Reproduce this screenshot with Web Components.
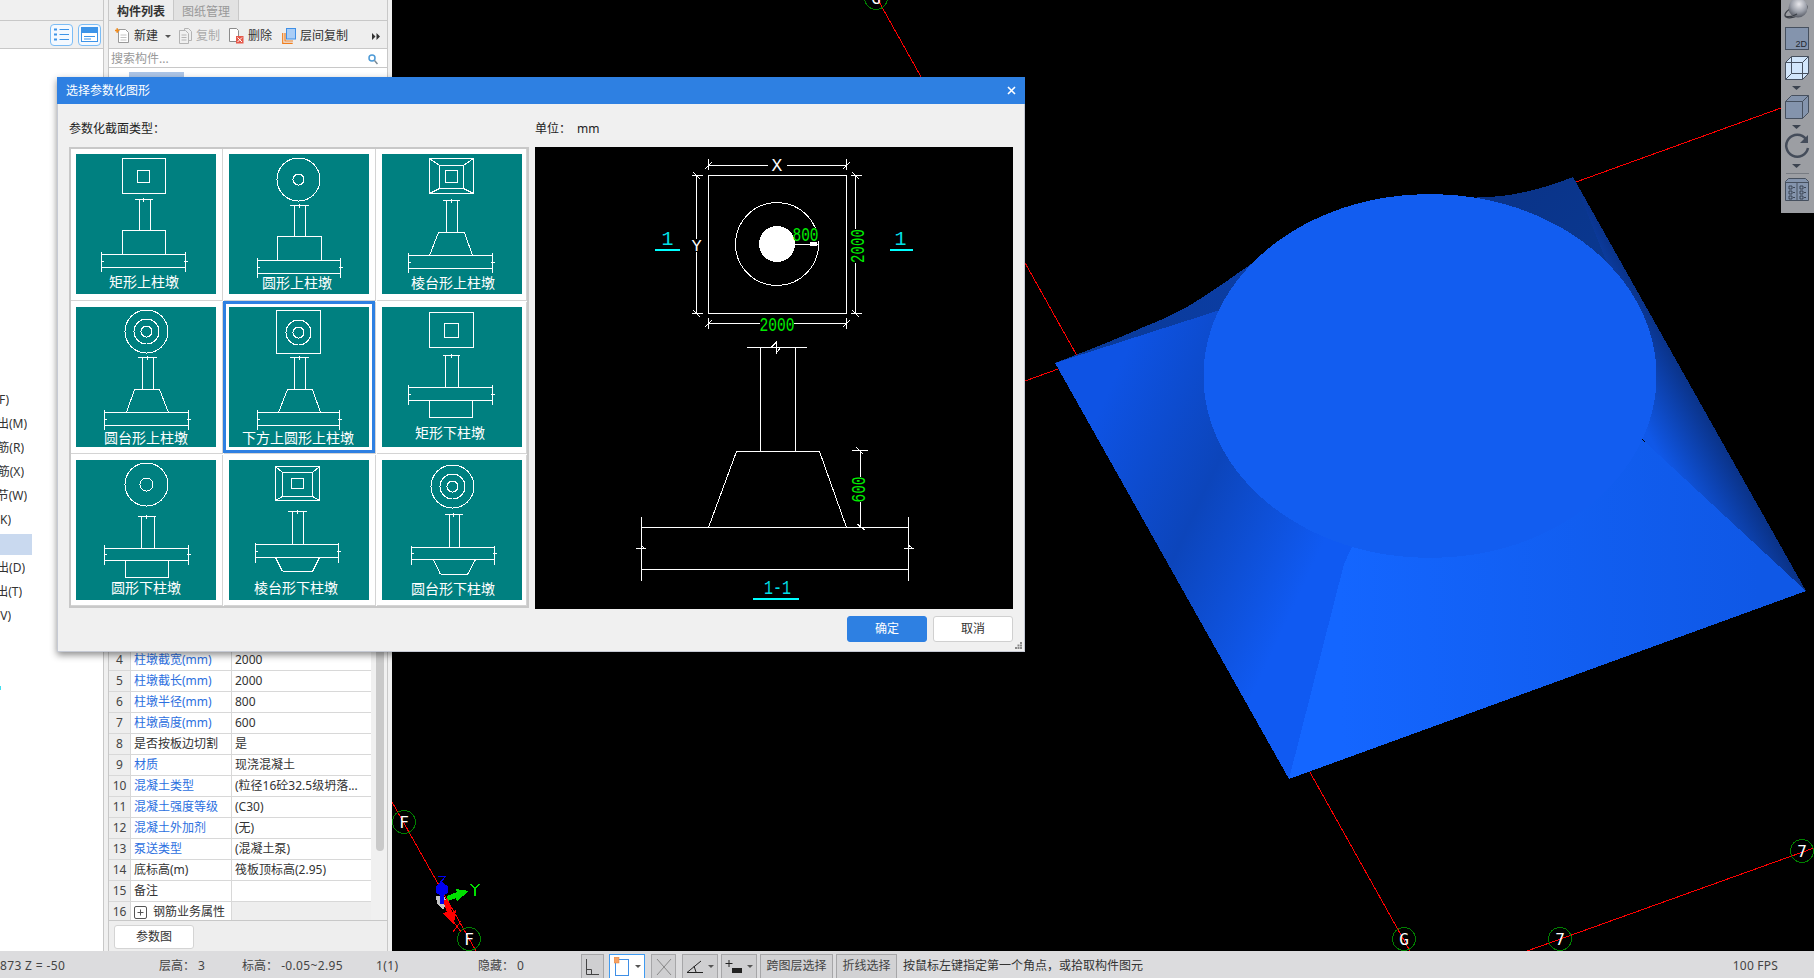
<!DOCTYPE html>
<html lang="zh">
<head>
<meta charset="utf-8">
<title>选择参数化图形</title>
<style>
  html, body { margin: 0; height: 100%; overflow: hidden; background: #000; }
</style>
</head>
<body>
<gl-app>
  <gl-side-nav slot="nav"></gl-side-nav>
  <gl-component-panel slot="panel">
    <gl-prop-row num="4" name="柱墩截宽(mm)" value="2000" link></gl-prop-row>
    <gl-prop-row num="5" name="柱墩截长(mm)" value="2000" link></gl-prop-row>
    <gl-prop-row num="6" name="柱墩半径(mm)" value="800" link></gl-prop-row>
    <gl-prop-row num="7" name="柱墩高度(mm)" value="600" link></gl-prop-row>
    <gl-prop-row num="8" name="是否按板边切割" value="是"></gl-prop-row>
    <gl-prop-row num="9" name="材质" value="现浇混凝土" link></gl-prop-row>
    <gl-prop-row num="10" name="混凝土类型" value="(粒径16砼32.5级坍落..." link></gl-prop-row>
    <gl-prop-row num="11" name="混凝土强度等级" value="(C30)" link></gl-prop-row>
    <gl-prop-row num="12" name="混凝土外加剂" value="(无)" link></gl-prop-row>
    <gl-prop-row num="13" name="泵送类型" value="(混凝土泵)" link></gl-prop-row>
    <gl-prop-row num="14" name="底标高(m)" value="筏板顶标高(2.95)"></gl-prop-row>
    <gl-prop-row num="15" name="备注" value=""></gl-prop-row>
    <gl-prop-row num="16" name="钢筋业务属性" value="" group></gl-prop-row>
  </gl-component-panel>
  <gl-cad-view slot="view"></gl-cad-view>
  <gl-status-bar slot="status"></gl-status-bar>
  <gl-section-dialog slot="dialog" heading="选择参数化图形">
    <gl-pier-thumb type="rectUp">矩形上柱墩</gl-pier-thumb>
    <gl-pier-thumb type="roundUp">圆形上柱墩</gl-pier-thumb>
    <gl-pier-thumb type="prismUp">棱台形上柱墩</gl-pier-thumb>
    <gl-pier-thumb type="coneUp">圆台形上柱墩</gl-pier-thumb>
    <gl-pier-thumb type="squareRoundUp" selected>下方上圆形上柱墩</gl-pier-thumb>
    <gl-pier-thumb type="rectDown">矩形下柱墩</gl-pier-thumb>
    <gl-pier-thumb type="roundDown">圆形下柱墩</gl-pier-thumb>
    <gl-pier-thumb type="prismDown">棱台形下柱墩</gl-pier-thumb>
    <gl-pier-thumb type="coneDown">圆台形下柱墩</gl-pier-thumb>
    <gl-section-preview slot="preview"></gl-section-preview>
  </gl-section-dialog>
</gl-app>

<script>
const UI_FONT = `"Noto Sans", "Noto Sans CJK SC", sans-serif`;
const BLUE = '#2e80e2';

// pixel values measured off the reference, all relative to the 140x140 teal tile
const PIER_SHAPES = {
  rectUp: {
    rects: [[46, 89, 4, 39], [61, 73, 16, 28]],
    top: [45, 58, 76], col: [63, 74, 76],
    block: [46, 89, 76, 100], slab: [25, 109, 100, 113, 97, 117],
    label: [68, 127]
  },
  roundUp: {
    circles: [[69, 25, 21.5], [69, 25, 5.5]],
    top: [51, 60, 79], col: [65, 76, 82],
    block: [48, 92, 82, 106], slab: [28, 111, 106, 119, 103, 123],
    label: [68, 128]
  },
  prismUp: {
    rects: [[47, 91, 4, 39], [57, 81, 11, 34], [63, 75, 16, 28]],
    diag: [47, 91, 4, 39, 57, 81, 11, 34],
    top: [46, 60, 77], col: [64, 75, 78],
    frustum: [56, 82, 78, 47, 90, 101], slab: [26, 110, 101, 114, 98, 118],
    label: [71, 128]
  },
  coneUp: {
    circles: [[70, 24, 21.5], [70, 24, 12.5], [70, 24, 5.5]],
    top: [50, 61, 80], col: [66, 77, 82],
    frustum: [58, 83, 82, 50, 92, 105], slab: [28, 112, 105, 118, 102, 122],
    label: [70, 130]
  },
  squareRoundUp: {
    rects: [[47, 91, 3, 46]],
    circles: [[69, 25, 12.5], [69, 25, 5.5]],
    top: [50, 60, 79], col: [65, 76, 82],
    frustum: [58, 83, 82, 49, 91, 105], slab: [28, 110, 105, 118, 102, 122],
    label: [69, 130]
  },
  rectDown: {
    rects: [[47, 91, 5, 40], [62, 76, 16, 30]],
    top: [48, 60, 77], col: [63, 76, 80],
    slab: [26, 110, 80, 93, 77, 97], block: [47, 90, 93, 110],
    label: [68, 125]
  },
  roundDown: {
    circles: [[70, 24, 21.5], [70, 24, 6.5]],
    top: [56, 61, 79], col: [65, 78, 88],
    slab: [28, 112, 88, 100, 84, 104], block: [49, 92, 100, 117],
    label: [70, 127]
  },
  prismDown: {
    rects: [[46, 90, 6, 40], [53, 83, 12, 36], [62, 74, 18, 28]],
    diag: [46, 90, 6, 40, 53, 83, 12, 36],
    top: [51, 58, 77], col: [63, 74, 84],
    slab: [26, 109, 84, 97, 82, 102], frustum: [46, 90, 97, 53, 83, 111],
    label: [67, 127]
  },
  coneDown: {
    circles: [[70, 26, 21.5], [70, 26, 12.5], [70, 26, 5.5]],
    top: [54, 62, 80], col: [67, 77, 87],
    slab: [29, 112, 87, 99, 85, 104], frustum: [51, 93, 99, 58, 85, 114],
    label: [71, 128]
  }
};

const rectPath = ([x1, x2, y1, y2]) => `M${x1} ${y1}H${x2}V${y2}H${x1}Z`;

class GlApp extends HTMLElement {
  constructor() {
    super();
    this.attachShadow({ mode: 'open' });
    this.shadowRoot.innerHTML = `<style>${this.styles}</style>
      <div class="main">
        <slot name="nav"></slot>
        <div class="gutter"></div>
        <slot name="panel"></slot>
        <div class="gutter"></div>
        <slot name="view"></slot>
      </div>
      <slot name="status"></slot>
      <slot name="dialog"></slot>`;
  }

  get styles() {
    return `
      :host {
        display: grid;
        grid-template-rows: 951px 27px;
        width: 1814px;
        height: 978px;
        position: relative;
        overflow: hidden;
        font: 12px/16px ${UI_FONT};
        color: #333;
      }
      .main { display: flex; min-height: 0; }
      .gutter { width: 4px; flex: none; background: #f0f0f0; }
    `;
  }
}

class GlSideNav extends HTMLElement {
  constructor() {
    super();
    this.attachShadow({ mode: 'open' });
    const items = [['F)', 9], ['出(M)', 27], ['筋(R)', 24], ['筋(X)', 24], ['节(W)', 27], ['K)', 11], ['', 32], ['出(D)', 25], ['出(T)', 22], ['V)', 11]];
    const rows = items.map(([text, end]) => text
      ? `<div class="row" style="width:${end}px"><span>${text}</span></div>`
      : `<div class="row"><div class="hl"></div></div>`).join('');
    this.shadowRoot.innerHTML = `<style>${this.styles}</style>
      <div class="strip"></div>
      <div class="bar">
        <button class="tool" aria-label="list">
          <svg width="17" height="15" viewBox="0 0 17 15" fill="none" stroke="#3d94e8"><path d="M1 2.5h3M1 7.5h3M1 12.5h3" stroke-width="2"/><path d="M6.5 2.5H16M6.5 7.5H16M6.5 12.5H16"/></svg>
        </button>
        <button class="tool" aria-label="form">
          <svg width="17" height="15" viewBox="0 0 17 15"><rect x=".5" y=".5" width="16" height="14" fill="#fff" stroke="#3d94e8"/><rect x="1" y="1" width="15" height="5" fill="#3d94e8"/><path d="M3 9.5h11M3 12h7" stroke="#3d94e8"/></svg>
        </button>
      </div>
      <div class="list">${rows}<div class="mark"></div></div>`;
  }

  get styles() {
    return `
      :host { display: flex; flex-direction: column; width: 103px; flex: none; background: #fff; border-right: 1px solid #c8c8c8; }
      .strip { height: 20px; background: #f0f0f0; border-bottom: 1px solid #c8c8c8; }
      .bar { height: 27px; background: #f0f0f0; border-bottom: 1px solid #c8c8c8; display: flex; gap: 5px; padding-left: 50px; align-items: center; }
      .tool { width: 23px; height: 22px; padding: 0; display: grid; place-items: center; background: #f4f9ff; border: 1px solid #7bbcf5; border-radius: 4px; }
      .list { flex: 1; padding-top: 339px; }
      .row { height: 24px; display: flex; justify-content: flex-end; align-items: center; overflow: hidden; white-space: nowrap; color: #333; }
      .row span { flex: none; }
      .hl { width: 32px; height: 21px; background: #c9d9ef; margin-right: auto; }
      .mark { width: 1px; height: 4px; background: #40e0f0; margin-top: 58px; }
    `;
  }
}

class GlComponentPanel extends HTMLElement {
  constructor() {
    super();
    this.attachShadow({ mode: 'open' });
    this.shadowRoot.innerHTML = `<style>${this.styles}</style>
      <div class="tabs"><div class="tab on">构件列表</div><div class="tab">图纸管理</div></div>
      <div class="tools">
        <span class="item first">
          <svg width="15" height="16" viewBox="0 0 15 16" fill="none"><path d="M3.5 1.5h7l3 3v10h-10z" fill="#fff" stroke="#9a9a9a"/><path d="M5.5 7h6M5.5 9.5h6M5.5 12h6" stroke="#c4c4c4"/><path d="M0 2.5h4.5M2.2 .3v4.5" stroke="#f08a1c" stroke-width="1.6"/></svg>
          新建<i class="caret"></i>
        </span>
        <span class="item off">
          <svg width="13" height="16" viewBox="0 0 13 16" fill="none" stroke="#b4b4b4"><path d="M.5 2.5h5v-2h4l3 3v9h-3"/><path d="M.5 2.5v13h9v-10l-3-3z" fill="#f0f0f0"/><path d="M2.5 7h5M2.5 9.500h5M2.500 12h5"/></svg>
          复制
        </span>
        <span class="item">
          <svg width="15" height="16" viewBox="0 0 15 16" fill="none"><path d="M.5 .5h7l2 2v11h-9z" fill="#fff" stroke="#8c8c8c"/><rect x="7" y="8" width="7.500" height="7.500" fill="#e6584a"/><path d="M8.500 9.500l4.500 4.500M13 9.500l-4.500 4.500" stroke="#fff"/></svg>
          删除
        </span>
        <span class="item wide">
          <svg width="14" height="16" viewBox="0 0 14 16" fill="none"><path d="M.7 5v10.300h10M3 5v8h8" stroke="#f07d1c" stroke-width="1.200"/><rect x="4.500" y=".5" width="9" height="10.500" fill="#a9cdf6" stroke="#3f8fe6"/></svg>
          层间复制
        </span>
        <svg class="more" width="8" height="7" viewBox="0 0 8 7" fill="#333"><path d="M0 0l3.500 3.500L0 7zM4.500 0L8 3.500 4.500 7z"/></svg>
      </div>
      <div class="search">
        <span>搜索构件...</span>
        <svg width="10" height="11" viewBox="0 0 10 11" fill="none"><circle cx="4" cy="4" r="3" stroke="#4d9ad6" stroke-width="1.500"/><path d="M6.500 6.500L9.500 10" stroke="#7a8a96" stroke-width="1.500"/></svg>
      </div>
      <div class="body"><div class="hl"></div></div>
      <div class="props">
        <div class="table"><slot></slot></div>
        <div class="track"><div class="thumb"></div></div>
      </div>
      <div class="foot"><button>参数图</button></div>`;
  }

  get styles() {
    return `
      :host { display: flex; flex-direction: column; width: 278px; flex: none; background: #eeeeee; border-left: 1px solid #c8c8c8; border-right: 1px solid #c8c8c8; height: 951px; box-sizing: content-box; }
      .tabs { height: 21px; display: flex; border-bottom: 1px solid #c8c8c8; box-sizing: border-box; }
      .tab { width: 64px; text-align: center; line-height: 23px; color: #999; background: #e2e2e2; border-right: 1px solid #c8c8c8; }
      .tab.on { color: #333; background: #eeeeee; font-weight: 600; }
      .tools { height: 28px; display: flex; align-items: center; box-sizing: border-box; border-bottom: 1px solid #c8c8c8; padding: 3px 4px 0 6px; }
      .item { display: inline-flex; align-items: center; gap: 4px; margin-right: 9px; }
      .item.off { color: #aaa; }
      .wide { margin-left: 1px; }
      .caret { width: 0; height: 0; border: 3px solid transparent; border-top: 3px solid #555; border-bottom: 0; margin-left: 3px; }
      .first { margin-right: 8px; }
      .more { margin-left: auto; margin-right: 3px; }
      .search { background: #fff; border-bottom: 1px solid #c8c8c8; display: flex; align-items: center; justify-content: space-between; padding: 2px 9px 0 2px; box-sizing: border-box; height: 19px; color: #999; }
      .body { flex: 1; background: #fff; }
      .hl { width: 55px; height: 6px; margin: 4px 0 0 20px; background: #adc6e8; }
      .props { height: 270px; display: flex; overflow: hidden; border-bottom: 1px solid #c8c8c8; }
      .table { width: 262px; flex: none; height: 273px; box-sizing: border-box; }
      .track { flex: 1; background: #f0f0f0; padding: 0 3px 0 5px; }
      .thumb { height: 201px; background: #c9c9c9; border-radius: 0 0 4px 4px; }
      .foot { height: 30px; display: flex; align-items: center; padding-left: 5px; box-sizing: border-box; }
      button { width: 80px; height: 24px; padding: 0; font: inherit; color: #333; background: #fff; border: 1px solid #d4d4d4; border-radius: 3px; margin-top: 1px; }
    `;
  }
}

class GlPropRow extends HTMLElement {
  constructor() {
    super();
    this.attachShadow({ mode: 'open' });
  }

  connectedCallback() {
    this.render();
  }

  render() {
    const plus = this.hasAttribute('group')
      ? `<svg width="13" height="13" viewBox="0 0 13 13" fill="none" stroke="#555"><rect x=".5" y=".5" width="12" height="12" rx="1.500"/><path d="M3.500 6.500h6M6.500 3.500v6"/></svg>`
      : '';
    this.shadowRoot.innerHTML = `<style>${this.styles}</style>
      <div class="num">${this.getAttribute('num')}</div>
      <div class="name ${this.hasAttribute('link') ? 'link' : ''}">${plus}<span>${this.getAttribute('name')}</span></div>
      <div class="value">${this.getAttribute('value')}</div>`;
  }

  get styles() {
    return `
      :host { display: grid; grid-template-columns: 22px 101px 1fr; height: 21px; box-sizing: border-box; border-bottom: 1px solid #d8d8d8; line-height: 20px; white-space: nowrap; background: #fff; }
      :host([group]) { background: #eeeeee; }
      .num { background: #eeeeee; border-right: 1px solid #d8d8d8; text-align: center; color: #444; }
      .name { padding-left: 3px; border-right: 1px solid #d8d8d8; display: flex; align-items: center; gap: 6px; background: #fff; }
      .link { color: #2c6fe0; }
      .value { padding-left: 3px; overflow: hidden; }
    `;
  }
}

class GlCadView extends HTMLElement {
  constructor() {
    super();
    this.attachShadow({ mode: 'open' });
    const marks = [[876, -2, 'G'], [404, 822, 'F'], [469, 939, 'F'], [1404, 939, 'G'], [1560, 939, '7'], [1802, 851, '7']]
      .map(([x, y, t]) => `<circle cx="${x}" cy="${y}" r="11.500" fill="none" stroke="#008000"/>
        <text x="${x}" y="${y + 6}" text-anchor="middle" class="axis">${t}</text>`).join('');
    this.shadowRoot.innerHTML = `<style>${this.styles}</style>
      <svg width="1422" height="951" viewBox="392 0 1422 951">
        <defs>
          <linearGradient id="faceLeft" gradientUnits="userSpaceOnUse" x1="1090" y1="430" x2="1325" y2="540">
            <stop offset="0" stop-color="#0e53e4"/><stop offset=".5" stop-color="#0c45bb"/><stop offset="1" stop-color="#105af2"/>
          </linearGradient>
          <linearGradient id="faceFront" gradientUnits="userSpaceOnUse" x1="1340" y1="650" x2="1760" y2="640">
            <stop offset="0" stop-color="#1466ff"/><stop offset="1" stop-color="#0f58e6"/>
          </linearGradient>
          <linearGradient id="faceRight" gradientUnits="userSpaceOnUse" x1="1640" y1="420" x2="1696" y2="389">
            <stop offset="0" stop-color="#1058e8"/><stop offset="1" stop-color="#0a3184"/>
          </linearGradient>
          <linearGradient id="faceBack" gradientUnits="userSpaceOnUse" x1="1060" y1="360" x2="1250" y2="270">
            <stop offset="0" stop-color="#0a3a96"/><stop offset="1" stop-color="#0b3da4"/>
          </linearGradient>
          <linearGradient id="faceTop" gradientUnits="userSpaceOnUse" x1="1480" y1="190" x2="1640" y2="330">
            <stop offset="0" stop-color="#0a3388"/><stop offset=".7" stop-color="#0a3890"/><stop offset="1" stop-color="#0c45b4"/>
          </linearGradient>
        </defs>
        <g class="cad" fill="none" stroke="#f00">
          <path d="M878 0L1410 951M392 802L476 951M1000 390L1781 108M1527 951L1814 848"/>
        </g>
        <g class="cad">
          <path fill="url(#faceBack)" d="M1055 363Q1120 338 1141 328Q1165 319 1187 307Q1215 290 1238 273L1263 256L1290 300L1217 312Z"/>
          <path fill="#0f58e6" d="M1430 376L1806 591L1289 779L1344 564Z"/>
          <path fill="url(#faceRight)" d="M1573 177L1806 591L1645 442L1520 250Z"/>
          <path fill="url(#faceTop)" d="M1573 177Q1520 198 1478 197L1460 210L1640 420L1655 385Z"/>
          <path fill="url(#faceLeft)" d="M1055 363L1289 779L1344 564L1430 376L1217 311Z"/>
          <path fill="url(#faceFront)" d="M1289 779L1806 591L1645 442L1600 400L1430 376L1344 564Z"/>
          <ellipse cx="1430" cy="376" rx="226.500" ry="182" fill="#125df0"/>
        </g>
        ${marks}
        <g class="cad">
          <path fill="#c4c4c4" d="M436 896l9 1 2 6-4 7-6-6z"/>
          <path fill="#f00" d="M443 901l5-2 4 13 4-2-2 14-12-11 5-1z"/>
          <path fill="#00e000" d="M447 896l10-4-1-3 13 2-12 10-1-3-8 3z"/>
          <path fill="#0000f0" d="M440 884l2-3 2 3 4 2 0 7-4 2v9h-4v-9l-4-2v-7z"/>
          <path d="M438 876h8l-8 9h8" fill="none" stroke="#0000f0"/>
          <path d="M471 884l4 5 4-5M475 889v7" fill="none" stroke="#00e000" stroke-width="1.500"/>
          <path d="M453 921l8 11M461 921l-8 11" fill="none" stroke="#f00"/>
        </g>
      </svg>
      <gl-view-tools></gl-view-tools>`;
  }

  get styles() {
    return `
      :host { display: block; flex: 1; position: relative; background: #000; overflow: hidden; }
      svg { display: block; }
      .cad { shape-rendering: crispEdges; }
      circle { shape-rendering: crispEdges; }
      .axis { font: 16px "DejaVu Sans Mono", monospace; fill: #fff; }
    `;
  }
}

class GlViewTools extends HTMLElement {
  constructor() {
    super();
    this.attachShadow({ mode: 'open' });
    const caret = y => `<path d="M11 ${y}h9l-4.500 4z" fill="#3c4450"/>`;
    this.shadowRoot.innerHTML = `<style>${this.styles}</style>
      <svg width="33" height="213" viewBox="0 0 33 213" fill="none">
        <defs><radialGradient id="ball" cx=".55" cy=".3" r=".75"><stop offset="0" stop-color="#e8e8ec"/><stop offset=".55" stop-color="#9a9ea8"/><stop offset="1" stop-color="#4a4e58"/></radialGradient></defs>
        <ellipse cx="15" cy="11" rx="12" ry="5" stroke="#3c4048" stroke-width="1.200" transform="rotate(-25 15 11)"/>
        <circle cx="17" cy="8" r="9.500" fill="url(#ball)"/>
        <path d="M4 16q5 2 12-2" stroke="#3c4048" stroke-width="1.200"/>
        <rect x="4.500" y="27.500" width="23" height="22" fill="#8494ad" stroke="#46505f"/>
        <text x="26" y="47" text-anchor="end" class="tag">2D</text>
        <path d="M4.500 62.500l6-6h17v17l-6 6h-17zM4.500 62.500h17v17M21.500 62.500l6-6" fill="#d2e6fb" stroke="#46505f"/>
        <path d="M10.500 56.500v17h17M10.500 73.500l-6 6" stroke="#46505f"/>
        ${caret(86)}
        <path d="M4.500 101.500l6-6h17v17l-6 6h-17zM4.500 101.500h17v17M21.500 101.500l6-6" fill="#8494ad" stroke="#46505f"/>
        ${caret(125)}
        <path d="M25 139a11 11 0 1 0 2 9" stroke="#444c5a" stroke-width="2.500"/>
        <path d="M27 135v8h-8z" fill="#444c5a"/>
        ${caret(164)}
        <path d="M5 173.500h23" stroke="#777b82"/>
        <path d="M4.500 181.500l3-3h17l3 3v19h-23z" fill="#8494ad" stroke="#46505f"/>
        <path d="M4.500 182.500h23M16 183v17" stroke="#46505f"/>
        <path d="M8 186h3v3H8zM8 191h3v3H8zM8 196h3v3H8zM19 186h3v3h-3zM19 191h3v3h-3zM19 196h3v3h-3zM12 187.500h2M12 192.500h2M12 197.500h2M23 187.500h2M23 192.500h2M23 197.500h2" stroke="#2c3440" stroke-width=".8"/>
      </svg>`;
  }

  get styles() {
    return `
      :host { position: absolute; top: 0; right: 0; width: 33px; height: 213px; background: #9c9ea3; }
      svg { display: block; }
      .tag { font: 9px "Liberation Sans", sans-serif; fill: #20262e; }
    `;
  }
}

class GlStatusBar extends HTMLElement {
  constructor() {
    super();
    this.attachShadow({ mode: 'open' });
    const caret = `<i class="caret"></i>`;
    this.shadowRoot.innerHTML = `<style>${this.styles}</style>
      <span class="cell" style="width:159px"><b>873 Z = -50</b></span>
      <span class="cell" style="width:83px">层高：&nbsp;3</span>
      <span class="cell" style="width:134px">标高：&nbsp;<b>-0.05~2.95</b></span>
      <span class="cell" style="width:102px"><b>1(1)</b></span>
      <span class="cell" style="width:103px">隐藏：&nbsp;0</span>
      <span class="btn" style="width:23px">
        <svg width="13" height="16" viewBox="0 0 13 16" fill="none" stroke="#444"><path d="M.5 0v15.500H13M.5 10.500h5v5"/></svg>
      </span>
      <span class="btn active" style="width:36px;margin-left:5px">
        <svg width="16" height="19" viewBox="0 0 16 19"><rect x="1.500" y="2.500" width="13" height="16" fill="#fff" stroke="#3f8fe6"/><rect x="0" y="0" width="5" height="6" fill="#f5a266" stroke="#e8823a" stroke-width=".5"/></svg>${caret}
      </span>
      <span class="btn" style="width:25px;margin-left:6px">
        <svg width="16" height="18" viewBox="0 0 16 18" fill="none" stroke="#888"><path d="M1 1l14 16M15 1L1 17"/></svg>
      </span>
      <span class="btn" style="width:36px;margin-left:6px">
        <svg width="17" height="13" viewBox="0 0 17 13" fill="none" stroke="#222"><path d="M15 1L1 12.500h16M8 6l2 6"/></svg>${caret}
      </span>
      <span class="btn" style="width:36px;margin-left:3px">
        <svg width="17" height="14" viewBox="0 0 17 14"><path d="M4 0v7M.5 3.500h7" stroke="#222" fill="none"/><rect x="7" y="8" width="10" height="5" fill="#222"/></svg>${caret}
      </span>
      <span class="btn text" style="width:73px;margin-left:3px">跨图层选择</span>
      <span class="btn text" style="width:61px;margin-left:3px">折线选择</span>
      <span class="hint">按鼠标左键指定第一个角点，或拾取构件图元</span>
      <span class="fps">100 FPS</span>`;
  }

  get styles() {
    return `
      :host { display: flex; align-items: stretch; background: #dcdcde; color: #444; white-space: nowrap; line-height: 29px; }
      .cell { flex: none; }
      b { font-weight: 400; letter-spacing: .35px; }
      .btn { flex: none; height: 24px; margin-top: 3px; box-sizing: border-box; background: #cfcfd1; border: 1px solid #a6a6a8; border-bottom: 0; display: flex; align-items: center; justify-content: center; gap: 5px; line-height: 16px; }
      .btn.active { background: #fff; border-color: #3f9bf2; }
      .btn.text { background: #d2d2d4; color: #444; padding-bottom: 2px; }
      .caret { width: 0; height: 0; border: 3px solid transparent; border-top: 3px solid #555; border-bottom: 0; }
      .hint { margin-left: 6px; color: #333; }
      .fps { margin-left: auto; padding-right: 36px; letter-spacing: .2px; }
    `;
  }
}

class GlPierThumb extends HTMLElement {
  constructor() {
    super();
    this.attachShadow({ mode: 'open' });
  }

  connectedCallback() {
    this.render();
  }

  buildLines(shape) {
    const d = [];
    (shape.rects || []).forEach(r => d.push(rectPath(r)));
    if (shape.diag) {
      const [ax1, ax2, ay1, ay2, bx1, bx2, by1, by2] = shape.diag;
      d.push(`M${ax1} ${ay1}L${bx1} ${by1}M${ax2} ${ay1}L${bx2} ${by1}M${ax1} ${ay2}L${bx1} ${by2}M${ax2} ${ay2}L${bx2} ${by2}`);
    }
    const [ty, tx1, tx2] = shape.top;
    const [cx1, cx2, cy2] = shape.col;
    const mid = Math.round((tx1 + tx2) / 2);
    d.push(`M${tx1} ${ty}H${tx2}M${mid} ${ty - 2}v4M${cx1} ${ty}V${cy2}M${cx2} ${ty}V${cy2}`);
    const [sx1, sx2, sy1, sy2, vy1, vy2] = shape.slab;
    const tickY = Math.round((sy1 + sy2) / 2);
    d.push(rectPath([sx1, sx2, sy1, sy2]));
    d.push(`M${sx1} ${vy1}V${vy2}M${sx2} ${vy1}V${vy2}M${sx1 - 1} ${tickY}h3M${sx2 - 2} ${tickY}h4`);
    if (shape.block) d.push(rectPath(shape.block));
    if (shape.frustum) {
      const [x1, x2, y1, x3, x4, y2] = shape.frustum;
      d.push(`M${x1} ${y1}H${x2}L${x4} ${y2}${shape.frustum[2] > shape.slab[2] ? `H${x3}` : ''}M${x1} ${y1}L${x3} ${y2}`);
    }
    return d.join('');
  }

  render() {
    const shape = PIER_SHAPES[this.getAttribute('type')];
    const circles = (shape.circles || []).map(([x, y, r]) => `<circle cx="${x}" cy="${y}" r="${r}"/>`).join('');
    this.shadowRoot.innerHTML = `<style>${this.styles}</style>
      <div class="tile">
        <svg width="140" height="140" viewBox="0 0 140 140" fill="none" stroke="#fff">
          <g transform="translate(.5 .5)"><path d="${this.buildLines(shape)}"/>${circles}</g>
        </svg>
        <span class="label" style="left:${shape.label[0]}px;top:${shape.label[1]}px"><slot></slot></span>
      </div>`;
  }

  get styles() {
    return `
      :host { display: block; position: relative; background: #fff; box-sizing: border-box; padding: 5px 0 0 5px; border-right: 1px solid #d4d4d4; border-bottom: 1px solid #d4d4d4; }
      :host([selected])::after { content: ""; position: absolute; inset: -1px 0 0 -1px; border: 3px solid ${BLUE}; }
      .tile { width: 140px; height: 140px; background: #008080; position: relative; }
      svg { display: block; shape-rendering: crispEdges; }
      .label { position: absolute; transform: translate(-50%, -50%); color: #fff; white-space: nowrap; font-size: 14px; line-height: 16px; font-family: "Noto Sans CJK SC", sans-serif; font-weight: 400; }
    `;
  }
}

class GlSectionPreview extends HTMLElement {
  constructor() {
    super();
    this.attachShadow({ mode: 'open' });
    this.shadowRoot.innerHTML = `<style>${this.styles}</style>
      <svg width="478" height="462" viewBox="0 0 478 462" fill="none">
        <g stroke="#fff" class="line">
          <rect x="173.500" y="28.500" width="138" height="138"/>
          <path d="M173.500 18.500H233M252 18.500H311.500M173.500 12v11M311.500 12v11M170 22l7-7M308 22l7-7"/>
          <path d="M161.500 28.500V92M161.500 105V166.500M157 28.500h11M157 166.500h11M158 25l7 7M158 163l7 7"/>
          <path d="M320.500 28.500V82M320.500 116V166.500M316 28.500h11M316 166.500h11M317 25l7 7M317 163l7 7"/>
          <path d="M173.500 176.500H225M259 176.500H311.500M173.500 171v11M311.500 171v11M170 180l7-7M308 180l7-7"/>
          <circle cx="242" cy="97" r="41.500"/>
        </g>
        <rect x="257" y="81" width="27" height="15.500" fill="#000"/>
        <circle cx="242" cy="97" r="18" fill="#fff" class="line"/>
        <g stroke="#fff" class="line">
          <path d="M260 97.500H283M283 94v4"/>
          <path d="M275 95h6v3h-6z" fill="#fff"/>
          <path d="M212 200.500H272M225.500 200.500V304.500M260.500 200.500V304.500M236 200.500l5.500-5.500v11l4-5.500"/>
          <path d="M201.500 304.500H284.500M201.500 304.500L173.500 380.500M284.500 304.500L311.500 380.500"/>
          <path d="M106.500 380.500H373.500M106.500 422.500H373.500M106.500 370V434M373.500 370V434"/>
          <path d="M101 401.500h9l-4-3M369 401.500h9l-4-3M106.500 402v5M373.500 402v5"/>
          <path d="M325.500 303V330M325.500 355V381M317 303.500h16M321 300l7 7M322 377l8 6"/>
        </g>
        <text x="242" y="24" text-anchor="middle" class="mono white" font-size="18">X</text>
        <text x="161.500" y="104" text-anchor="middle" class="mono white" font-size="17">Y</text>
        <text x="242" y="184" text-anchor="middle" class="mono green" font-size="20" textLength="35" lengthAdjust="spacingAndGlyphs">2000</text>
        <text x="270.500" y="94" text-anchor="middle" class="mono green" font-size="20" textLength="26" lengthAdjust="spacingAndGlyphs">800</text>
        <text transform="translate(329 99) rotate(-90)" text-anchor="middle" class="mono green" font-size="20" textLength="34" lengthAdjust="spacingAndGlyphs">2000</text>
        <text transform="translate(330 342.500) rotate(-90)" text-anchor="middle" class="mono green" font-size="20" textLength="26" lengthAdjust="spacingAndGlyphs">600</text>
        <text x="132.500" y="98" text-anchor="middle" class="mono cyan" font-size="20">1</text>
        <text x="365.500" y="98" text-anchor="middle" class="mono cyan" font-size="20">1</text>
        <text x="242.500" y="447" text-anchor="middle" class="mono cyan" font-size="20" textLength="27" lengthAdjust="spacingAndGlyphs">1-1</text>
        <path d="M120 102.500H145M355 102.500H378M218 451.500H264" stroke="#00ffff" stroke-width="2" class="line"/>
      </svg>`;
  }

  get styles() {
    return `
      :host { display: block; width: 478px; height: 462px; background: #000; }
      svg { display: block; }
      .line { shape-rendering: crispEdges; }
      .mono { font-family: "Liberation Mono", monospace; }
      .white { fill: #fff; }
      .green { fill: #00ee00; }
      .cyan { fill: #00dfe6; }
    `;
  }
}

class GlSectionDialog extends HTMLElement {
  constructor() {
    super();
    this.attachShadow({ mode: 'open' });
    this.shadowRoot.innerHTML = `<style>${this.styles}</style>
      <header>
        <span>${this.getAttribute('heading')}</span>
        <svg width="9" height="9" viewBox="0 0 9 9" stroke="#fff" stroke-width="1.600"><path d="M1 1l7 7M8 1L1 8"/></svg>
      </header>
      <div class="content">
        <div class="col left">
          <div class="caption">参数化截面类型：</div>
          <div class="grid"><slot></slot></div>
        </div>
        <div class="col">
          <div class="caption">单位：<span class="unit">mm</span></div>
          <slot name="preview"></slot>
        </div>
      </div>
      <footer>
        <button class="primary">确定</button>
        <button>取消</button>
      </footer>
      <svg class="grip" width="7" height="7" viewBox="0 0 7 7" fill="#8a8a8a"><path d="M5 0h2v2H5zM2.500 2.500h2v2h-2zM5 2.500h2v2H5zM0 5h2v2H0zM2.500 5h2v2h-2zM5 5h2v2H5z"/></svg>`;
  }

  get styles() {
    return `
      :host { position: absolute; left: 57px; top: 77px; width: 968px; height: 575px; box-sizing: border-box; display: flex; flex-direction: column; background: #f0f0f0; border: 1px solid #c6cad4; border-top: 0; box-shadow: 0 3px 7px rgba(0, 0, 0, .45); }
      header { height: 27px; flex: none; margin: 0 -1px; background: ${BLUE}; color: #fff; display: flex; align-items: center; justify-content: space-between; padding: 0 9px; }
      .content { display: flex; gap: 6px; padding-left: 11px; flex: none; }
      .col { display: flex; flex-direction: column; }
      .caption { height: 43px; box-sizing: border-box; padding-top: 17px; color: #222; white-space: nowrap; }
      .unit { margin-left: 6px; }
      .grid { width: 460px; height: 461px; box-sizing: border-box; border: 2px solid #c8c8c8; background: #fff; display: grid; grid-template-columns: 152px 152px 1fr; grid-template-rows: 152px 152px 1fr; gap: 1px; }
      footer { display: flex; justify-content: flex-end; gap: 6px; padding: 7px 11px 0 0; }
      button { width: 80px; height: 26px; padding: 0; font: inherit; color: #333; background: #fff; border: 1px solid #d0d0d0; border-radius: 3px; }
      .primary { background: ${BLUE}; border-color: ${BLUE}; color: #fff; }
      .grip { position: absolute; right: 2px; bottom: 2px; }
    `;
  }
}

customElements.define('gl-pier-thumb', GlPierThumb);
customElements.define('gl-section-preview', GlSectionPreview);
customElements.define('gl-section-dialog', GlSectionDialog);
customElements.define('gl-prop-row', GlPropRow);
customElements.define('gl-side-nav', GlSideNav);
customElements.define('gl-component-panel', GlComponentPanel);
customElements.define('gl-view-tools', GlViewTools);
customElements.define('gl-cad-view', GlCadView);
customElements.define('gl-status-bar', GlStatusBar);
customElements.define('gl-app', GlApp);
</script>
</body>
</html>
